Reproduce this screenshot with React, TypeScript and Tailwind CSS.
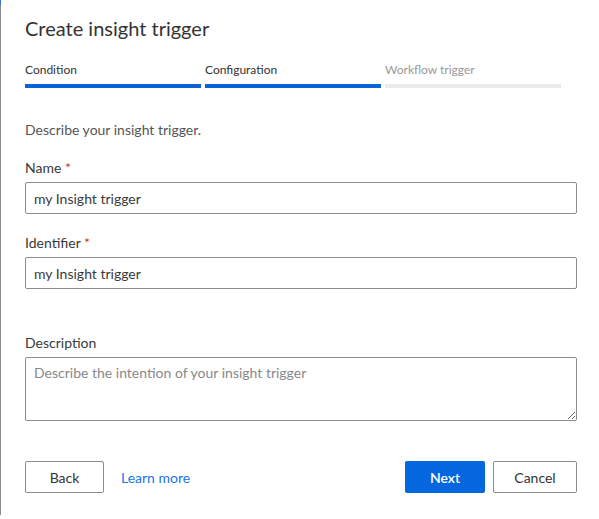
import React from 'react';

const steps = [
  { label: 'Condition', done: true },
  { label: 'Configuration', done: true },
  { label: 'Workflow trigger', done: false },
];

export default function App() {
  return (
    <div className="flex h-[519px] w-[599px] bg-white font-['Lato',sans-serif] text-[#333]">
      {/* left window edge */}
      <div className="flex w-px flex-col">
        <div className="h-[5px] bg-[#3d6fd0]" />
        <div className="flex-1 bg-[#8c8c8c]" />
        <div className="h-[4px]" />
      </div>

      <div className="flex flex-1 flex-col pl-[24px] pr-[22px]">
        <h1 className="mt-[14px] text-[20px] leading-[28px] font-normal text-[#333]">Create insight trigger</h1>

        {/* Stepper */}
        <div className="mt-[20px] flex gap-[4px] pr-[15px]">
          {steps.map((s) => (
            <div key={s.label} className="flex w-[176px] flex-col gap-[6px]">
              <span className={`text-[12px] leading-[16px] ${s.done ? 'text-[#333]' : 'text-[#999]'}`}>{s.label}</span>
              <div className={`h-[4px] ${s.done ? 'bg-[#0a64d8]' : 'bg-[#ebebeb]'}`} />
            </div>
          ))}
        </div>

        <p className="mt-[32px] text-[14px] leading-[20px] text-[#555]">Describe your insight trigger.</p>

        <label className="mt-[18px] mb-[4px] text-[14px] leading-[20px] text-[#3a3a3a]">
          Name <span className="text-[#c0392b]">*</span>
        </label>
        <input
          defaultValue="my Insight trigger"
          className="h-[32px] w-full rounded-[2px] border border-[#8c8c8c] px-[8px] text-[14px] text-[#3a3a3a] outline-none"
        />

        <label className="mt-[19px] mb-[4px] text-[14px] leading-[20px] text-[#3a3a3a]">
          Identifier <span className="text-[#c0392b]">*</span>
        </label>
        <input
          defaultValue="my Insight trigger"
          className="h-[32px] w-full rounded-[2px] border border-[#8c8c8c] px-[8px] text-[14px] text-[#3a3a3a] outline-none"
        />

        <label className="mt-[44px] mb-[4px] text-[14px] leading-[20px] text-[#3a3a3a]">Description</label>
        <textarea
          placeholder="Describe the intention of your insight trigger"
          className="h-[64px] w-full rounded-[2px] border border-[#8c8c8c] px-[8px] py-[5px] text-[14px] leading-[20px] text-[#333] outline-none placeholder:text-[#888]"
        />

        {/* Footer */}
        <div className="mt-[40px] flex items-center">
          <button className="h-[32px] w-[79px] rounded-[2px] border border-[#8c8c8c] bg-white text-[14px] text-[#333]">Back</button>
          <a className="ml-[17px] text-[14px] text-[#1a73e8]">Learn more</a>
          <div className="flex-1" />
          <button className="h-[32px] w-[80px] rounded-[2px] bg-[#0567e0] text-[14px] font-semibold text-white">Next</button>
          <button className="ml-[8px] h-[32px] w-[84px] rounded-[2px] border border-[#8c8c8c] bg-white text-[14px] text-[#333]">Cancel</button>
        </div>
      </div>
    </div>
  );
}
